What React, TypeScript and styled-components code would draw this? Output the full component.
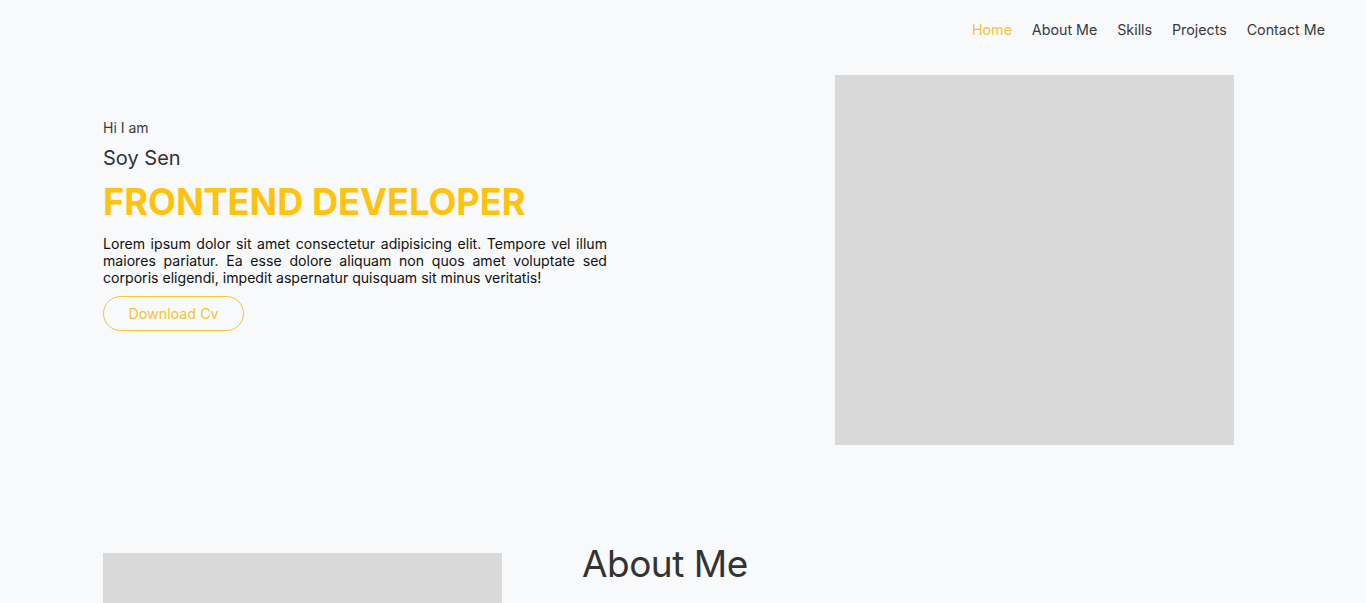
import React from "react";
import styled, { createGlobalStyle } from "styled-components";

const Global = createGlobalStyle`
  html, body { margin: 0; padding: 0; background: #f8f9fb; }
  body { font-family: Inter, "Noto Sans", Arial, sans-serif; color: #333; }
  * { box-sizing: border-box; }
`;

const Page = styled.div`
  min-height: 603px;
  background: #f8f9fb;
`;

const NavBar = styled.nav`
  display: flex;
  justify-content: flex-end;
  align-items: center;
  height: 59px;
  padding-right: 41px;
  gap: 19.8px;
`;

const NavLink = styled.a<{ $active?: boolean }>`
  font-size: 14.3px;
  color: ${(p) => (p.$active ? "#f5c430" : "#3a3a3a")};
  text-decoration: none;
  cursor: pointer;
`;

const Hero = styled.section`
  display: flex;
  justify-content: space-between;
  padding: 16px 132px 0 103px;
`;

const HeroText = styled.div`
  width: 504px;
  padding-top: 44px;
  display: flex;
  flex-direction: column;
  align-items: flex-start;
`;

const Greeting = styled.p`
  margin: 0;
  font-size: 14px;
  line-height: 18px;
  color: #3a3a3a;
`;

const Name = styled.h2`
  margin: 8px 0 0;
  font-size: 20px;
  font-weight: 400;
  line-height: 26px;
  color: #333;
`;

const Role = styled.h1`
  margin: 10px 0 0;
  font-size: 36.2px;
  font-weight: 700;
  line-height: 42px;
  color: #ffc20e;
`;

const Bio = styled.p`
  margin: 12px 0 0;
  font-size: 14.1px;
  line-height: 17px;
  text-align: justify;
  color: #111;
`;

const CvButton = styled.button`
  margin-top: 10px;
  width: 141px;
  height: 35px;
  border: 1px solid #f5c430;
  border-radius: 18px;
  background: transparent;
  color: #f5c430;
  font-family: inherit;
  font-size: 14.3px;
  cursor: pointer;
`;

const ImageBox = styled.div<{ $h: number }>`
  width: 399px;
  height: ${(p) => p.$h}px;
  background: #d9d9d9;
  flex-shrink: 0;
`;

const About = styled.section`
  display: flex;
  align-items: flex-start;
  gap: 80px;
  padding: 108px 132px 0 103px;
  height: 158px;
  overflow: hidden;
`;

const AboutTitle = styled.h2`
  margin: -12px 0 0;
  font-size: 37px;
  font-weight: 400;
  letter-spacing: -0.5px;
  color: #333;
`;

export default function App() {
  return (
    <Page>
      <Global />
      <NavBar>
        <NavLink $active>Home</NavLink>
        <NavLink>About Me</NavLink>
        <NavLink>Skills</NavLink>
        <NavLink>Projects</NavLink>
        <NavLink>Contact Me</NavLink>
      </NavBar>
      <Hero>
        <HeroText>
          <Greeting>Hi I am</Greeting>
          <Name>Soy Sen</Name>
          <Role>FRONTEND DEVELOPER</Role>
          <Bio>
            Lorem ipsum dolor sit amet consectetur adipisicing elit. Tempore vel illum
            maiores pariatur. Ea esse dolore aliquam non quos amet voluptate sed
            corporis eligendi, impedit aspernatur quisquam sit minus veritatis!
          </Bio>
          <CvButton>Download Cv</CvButton>
        </HeroText>
        <ImageBox $h={370} />
      </Hero>
      <About>
        <ImageBox $h={300} />
        <AboutTitle>About Me</AboutTitle>
      </About>
    </Page>
  );
}
